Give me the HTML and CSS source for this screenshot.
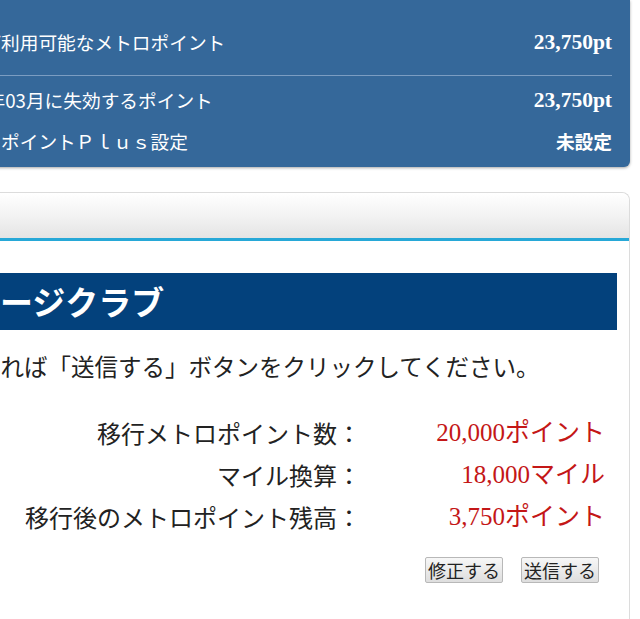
FILE: index.html
```html
<!DOCTYPE html>
<html lang="ja">
<head>
    <meta charset="UTF-8">
    <meta name="viewport" content="width=device-width, initial-scale=1.0">
    <title>メトロポイント移行 - 確認</title>
    <link rel="stylesheet" href="styles.css">
</head>
<body>
    <div class="page">
        <div class="summary">
            <div class="summary-row first">
                <span class="summary-label">現在ご利用可能なメトロポイント</span>
                <span class="summary-value">23,750pt</span>
            </div>
            <div class="summary-row second">
                <span class="summary-label">2025年03月に失効するポイント</span>
                <span class="summary-value">23,750pt</span>
            </div>
            <div class="summary-row third">
                <span class="summary-label">メトロポイントＰｌｕｓ設定</span>
                <span class="summary-value status">未設定</span>
            </div>
        </div>

        <div class="card">
            <div class="card-header"></div>
            <div class="card-body">
                <h2 class="club-title">ＡＮＡマイレージクラブ</h2>
                <p class="lead">この内容でよろしければ「送信する」ボタンをクリックしてください。</p>

                <div class="confirm">
                    <div class="confirm-label">移行メトロポイント数：</div>
                    <div class="confirm-value">20,000ポイント</div>
                    <div class="confirm-label">マイル換算：</div>
                    <div class="confirm-value">18,000マイル</div>
                    <div class="confirm-label">移行後のメトロポイント残高：</div>
                    <div class="confirm-value">3,750ポイント</div>
                </div>

                <div class="actions">
                    <button class="btn" type="button">修正する</button>
                    <button class="btn" type="button">送信する</button>
                </div>
            </div>
        </div>
    </div>
</body>
</html>
```

FILE: styles.css
```css
* {
    margin: 0;
    padding: 0;
    box-sizing: border-box;
}

body {
    font-family: "Noto Sans CJK JP", "Noto Sans", sans-serif;
    background: #fff;
    color: #222;
    overflow-x: hidden;
}

.page {
    margin-left: -224px;
    width: 854px;
}

/* point summary */
.summary {
    margin-left: 151px;
    padding: 0 18px 12px;
    background: #35689a;
    color: #fff;
    border-bottom-right-radius: 6px;
    box-shadow: 0 1px 3px rgba(0,0,0,0.35);
    font-size: 18.7px;
    line-height: 28px;
}

.summary-row {
    display: flex;
    justify-content: space-between;
    align-items: center;
}

.summary-row.first {
    padding: 28px 0 19px;
    border-bottom: 1px solid #7b9dc2;
}

.summary-row.second {
    padding: 10px 0 13px;
}

.summary-value {
    font-family: "Liberation Serif", "Noto Sans CJK JP", serif;
    font-weight: bold;
    font-size: 21.5px;
}

.summary-value.status {
    font-family: "Noto Sans CJK JP", sans-serif;
    font-size: 18.7px;
}

/* confirm card */
.card {
    margin-top: 25px;
    border: 1px solid #dcdcdc;
    border-bottom: none;
    border-radius: 8px 8px 0 0;
    min-height: 440px;
}

.card-header {
    height: 48px;
    background: linear-gradient(#ffffff 0%, #f3f3f3 50%, #e4e4e4 100%);
    border-radius: 8px 8px 0 0;
    border-bottom: 3px solid #27a8d7;
}

.card-body {
    padding: 32px 12px 0;
}

.club-title {
    height: 57px;
    padding-left: 13px;
    background: #03417c;
    color: #fff;
    font-size: 33px;
    font-weight: bold;
    line-height: 57px;
    white-space: nowrap;
}

.lead {
    margin-top: 19px;
    font-size: 23.5px;
    line-height: 34px;
    white-space: nowrap;
}

.confirm {
    display: grid;
    grid-template-columns: 1fr 244px;
    margin: 29px 12px 0 0;
    font-size: 24px;
    line-height: 42px;
}

.confirm-label {
    text-align: right;
    white-space: nowrap;
}

.confirm-value {
    text-align: right;
    color: #c41717;
    font-family: "Liberation Serif", "Noto Sans CJK JP", serif;
    font-size: 25px;
}

.actions {
    display: flex;
    justify-content: flex-end;
    gap: 18px;
    margin: 19px 18px 0 0;
}

.btn {
    height: 26px;
    padding: 0 2px;
    font-family: "Noto Sans CJK JP", sans-serif;
    font-size: 18px;
    line-height: 22px;
    color: #222;
    background: linear-gradient(#f7f7f7, #dedede);
    border: 1px solid #b8b8b8;
    border-radius: 2px;
}
```
